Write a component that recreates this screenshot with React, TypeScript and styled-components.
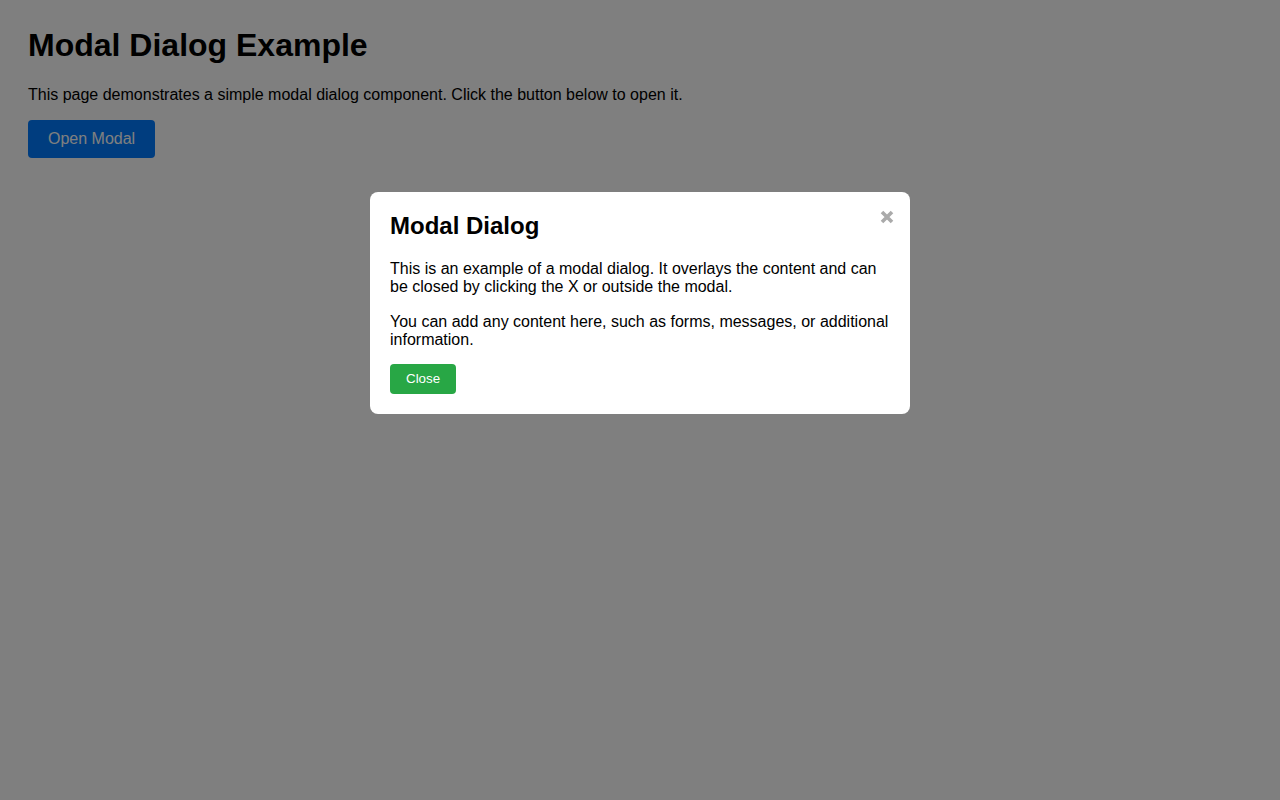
import { useState } from "react";
import styled, { createGlobalStyle } from "styled-components";

const GlobalStyle = createGlobalStyle`
  html, body {
    margin: 0;
    padding: 0;
    background: #fff;
    color: #000;
    font-family: "Liberation Sans", Arial, Helvetica, sans-serif;
  }
`;

const CloseIcon = () => (
  <svg width="14" height="14" viewBox="0 0 14 14" aria-hidden="true">
    <path d="M2 2 L12 12 M12 2 L2 12" stroke="currentColor" strokeWidth="3.6" strokeLinecap="butt" />
  </svg>
);

const App = () => {
  const [open, setOpen] = useState(true);

  return (
    <>
      <GlobalStyle />
      <St.Page>
        <St.Title>Modal Dialog Example</St.Title>
        <St.Text>This page demonstrates a simple modal dialog component. Click the button below to open it.</St.Text>
        <St.OpenBtn onClick={() => setOpen(true)}>Open Modal</St.OpenBtn>
      </St.Page>

      {open && (
        <St.Overlay onClick={() => setOpen(false)}>
          <St.Modal onClick={(e) => e.stopPropagation()}>
            <St.Dismiss aria-label="Close" onClick={() => setOpen(false)}>
              <CloseIcon />
            </St.Dismiss>
            <St.ModalTitle>Modal Dialog</St.ModalTitle>
            <St.Text>
              This is an example of a modal dialog. It overlays the content and can be closed by clicking the X or
              outside the modal.
            </St.Text>
            <St.Text $gap={14}>You can add any content here, such as forms, messages, or additional information.</St.Text>
            <St.CloseBtn onClick={() => setOpen(false)}>Close</St.CloseBtn>
          </St.Modal>
        </St.Overlay>
      )}
    </>
  );
};

export default App;

const St = {
  Page: styled.main`
    padding: 27px 28px;
  `,
  Title: styled.h1`
    margin: 0 0 22px;
    font-size: 32px;
    font-weight: 700;
  `,
  Text: styled.p<{ $gap?: number }>`
    margin: 0 0 ${({ $gap = 16 }) => $gap}px;
    font-size: 16px;
    line-height: 18.4px;
  `,
  OpenBtn: styled.button`
    height: 38px;
    padding: 0 20px;

    border: none;
    border-radius: 4px;
    background: #007bff;
    color: #fff;

    font-family: inherit;
    font-size: 16px;
    cursor: pointer;
  `,
  Overlay: styled.div`
    position: fixed;
    inset: 0;
    overflow: auto;
    background: rgba(0, 0, 0, 0.5);
  `,
  Modal: styled.div`
    position: relative;
    width: 500px;
    margin: 15% auto;
    padding: 20px;

    border-radius: 8px;
    background: #fff;
  `,
  Dismiss: styled.button`
    position: absolute;
    top: 18px;
    right: 16px;
    display: flex;
    padding: 0;

    border: none;
    background: none;
    color: #aaa;
    cursor: pointer;
  `,
  ModalTitle: styled.h2`
    margin: 0 0 20px;
    font-size: 24px;
    font-weight: 700;
  `,
  CloseBtn: styled.button`
    display: block;
    height: 30px;
    padding: 0 16px;

    border: none;
    border-radius: 4px;
    background: #28a745;
    color: #fff;

    font-family: inherit;
    font-size: 13.33px;
    cursor: pointer;
  `,
};
